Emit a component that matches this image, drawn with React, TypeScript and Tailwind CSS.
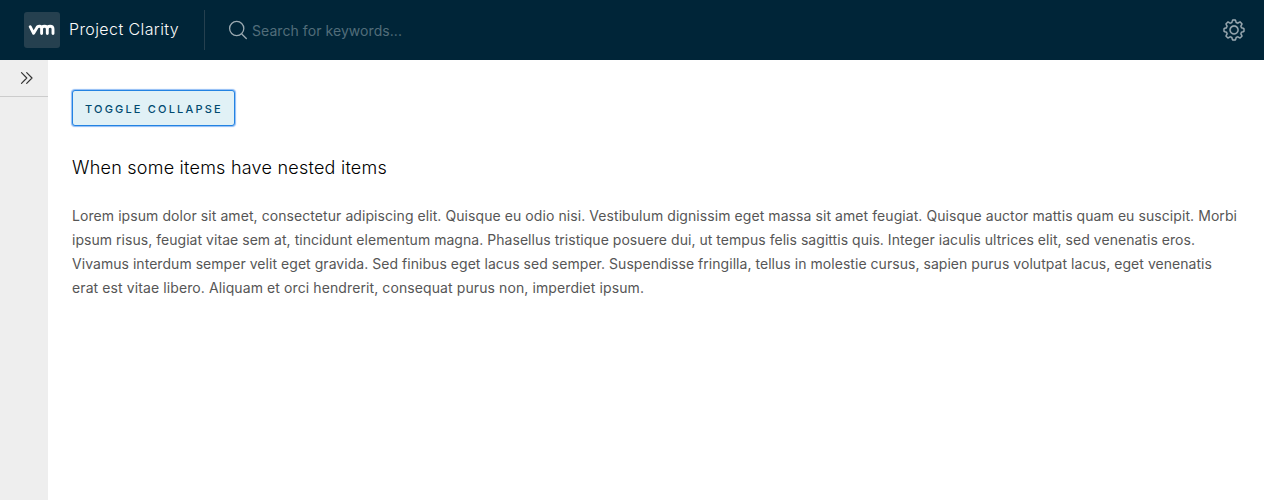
function SearchIcon() {
  return (
    <svg className="size-5 shrink-0" viewBox="0 0 20 20" fill="none" stroke="#9aa9b1" strokeWidth="1.3" strokeLinecap="round">
      <circle cx="8.7" cy="8.5" r="7.1" />
      <path d="M14 14.2 18.3 18.5" />
    </svg>
  );
}

function CogIcon() {
  return (
    <svg className="size-6" viewBox="0 0 36 36" fill="#9aa9b1" stroke="#9aa9b1" strokeWidth="0.3">
      <path d="M18.1,11c-3.9,0-7,3.1-7,7s3.1,7,7,7c3.9,0,7-3.1,7-7S22,11,18.1,11z M18.1,23c-2.8,0-5-2.2-5-5s2.2-5,5-5c2.8,0,5,2.2,5,5S20.9,23,18.1,23z" />
      <path d="M32.8,14.7L30,13.8l-0.6-1.5l1.4-2.6c0.3-0.6,0.2-1.4-0.3-1.9l-2.4-2.4c-0.5-0.5-1.3-0.6-1.9-0.3l-2.6,1.4l-1.5-0.6l-0.9-2.8C21,2.5,20.4,2,19.7,2h-3.4c-0.7,0-1.3,0.5-1.4,1.2L14,6c-0.6,0.1-1.1,0.3-1.6,0.6L9.8,5.2C9.2,4.9,8.4,5,7.9,5.5L5.5,7.9C5,8.4,4.9,9.2,5.2,9.8l1.3,2.5c-0.2,0.5-0.4,1.1-0.6,1.6l-2.8,0.9C2.5,15,2,15.6,2,16.3v3.4c0,0.7,0.5,1.3,1.2,1.5L6,22.1l0.6,1.5l-1.4,2.6c-0.3,0.6-0.2,1.4,0.3,1.9l2.4,2.4c0.5,0.5,1.3,0.6,1.9,0.3l2.6-1.4l1.5,0.6l0.9,2.9c0.2,0.6,0.8,1.1,1.5,1.1h3.4c0.7,0,1.3-0.5,1.5-1.1l0.9-2.9l1.5-0.6l2.6,1.4c0.6,0.3,1.4,0.2,1.9-0.3l2.4-2.4c0.5-0.5,0.6-1.3,0.3-1.9l-1.4-2.6l0.6-1.5l2.9-0.9c0.6-0.2,1.1-0.8,1.1-1.5v-3.4C34,15.6,33.5,14.9,32.8,14.7z M32,19.4l-3.6,1.1L28.3,21c-0.3,0.7-0.6,1.4-0.9,2.1l-0.3,0.5l1.8,3.3l-2,2l-3.3-1.8l-0.5,0.3c-0.7,0.4-1.4,0.7-2.1,0.9l-0.5,0.1L19.4,32h-2.8l-1.1-3.6L15,28.3c-0.7-0.3-1.4-0.6-2.1-0.9l-0.5-0.3l-3.3,1.8l-2-2l1.8-3.3l-0.3-0.5c-0.4-0.7-0.7-1.4-0.9-2.1l-0.1-0.5L4,19.4v-2.8l3.4-1l0.2-0.5c0.2-0.8,0.5-1.5,0.9-2.2l0.3-0.5L7.1,9.1l2-2l3.2,1.8l0.5-0.3c0.7-0.4,1.4-0.7,2.2-0.9l0.5-0.2L16.6,4h2.8l1.1,3.5L21,7.7c0.7,0.2,1.4,0.5,2.1,0.9l0.5,0.3l3.3-1.8l2,2l-1.8,3.3l0.3,0.5c0.4,0.7,0.7,1.4,0.9,2.1l0.1,0.5l3.6,1.1V19.4z" />
    </svg>
  );
}

function Logo() {
  return (
    <svg className="size-9" viewBox="0 0 36 36" fill="none" strokeLinecap="round" strokeLinejoin="round">
      <rect width="36" height="36" rx="3" fill="#25404f" />
      <path
        d="M6.2 14.7 9.6 21.3 13.3 14.9Q14.2 14.2 15.6 14.2Q17.6 14.2 17.6 16.4V21.5M17.6 17Q17.6 14.2 20.5 14.2Q23.3 14.2 23.3 17V21.5M23.3 17Q23.3 14.2 26.1 14.2Q29 14.2 29 17V21.5"
        stroke="#fff"
        strokeWidth="2.9"
      />
    </svg>
  );
}

export default function App() {
  return (
    <div className="flex h-[500px] w-full flex-col overflow-hidden bg-white font-['Inter',sans-serif]">
      <header className="flex h-[60px] shrink-0 items-center bg-[#002538] pr-[18px] pl-6">
        <Logo />
        <span className="mb-0.5 ml-[9px] w-[135px] text-[16px] leading-6 font-light tracking-[0.4px] whitespace-nowrap text-[#fafafa]">
          Project Clarity
        </span>
        <div className="h-10 w-px bg-[#25404f]" />
        <label className="ml-[23px] flex flex-1 items-center">
          <SearchIcon />
          <span className="mt-px ml-1 text-[14px] leading-6 tracking-[0.067px] text-[#526d7a]">Search for keywords...</span>
        </label>
        <button className="flex" aria-label="Settings">
          <CogIcon />
        </button>
      </header>
      <div className="flex flex-1">
        <nav className="w-12 shrink-0 bg-[#eee]">
          <button className="flex h-[37px] w-full items-center border-b border-[#ccc] pl-5" aria-label="Expand">
            <svg className="size-3.5" viewBox="0 0 14 14" fill="none" stroke="#333" strokeWidth="1.2" strokeLinecap="round" strokeLinejoin="round">
              <path d="M1.5 1.7 6.8 7 1.5 12.3M6.7 1.7 12 7 6.7 12.3" />
            </svg>
          </button>
        </nav>
        <main className="flex flex-col items-start pt-[30px] pl-6">
          <button className="flex h-9 w-[163px] items-center rounded-[3px] border border-[#2383e2] bg-[#e1f1f6] pt-[3px] pl-3 text-[11px] leading-none font-medium tracking-[2.18px] whitespace-nowrap text-[#004a70] shadow-[0_0_1px_1px_#8fbcf5]">
            TOGGLE COLLAPSE
          </button>
          <h1 className="mt-[30px] text-[18px] leading-6 font-light tracking-[0.235px] text-black">When some items have nested items</h1>
          <p className="mt-6 text-[14px] leading-6 whitespace-nowrap text-[#565656]">
            <span className="block tracking-[0.072px]">Lorem ipsum dolor sit amet, consectetur adipiscing elit. Quisque eu odio nisi. Vestibulum dignissim eget massa sit amet feugiat. Quisque auctor mattis quam eu suscipit. Morbi</span>
            <span className="block tracking-[0.038px]">ipsum risus, feugiat vitae sem at, tincidunt elementum magna. Phasellus tristique posuere dui, ut tempus felis sagittis quis. Integer iaculis ultrices elit, sed venenatis eros.</span>
            <span className="block tracking-[0.043px]">Vivamus interdum semper velit eget gravida. Sed finibus eget lacus sed semper. Suspendisse fringilla, tellus in molestie cursus, sapien purus volutpat lacus, eget venenatis</span>
            <span className="block tracking-[0.099px]">erat est vitae libero. Aliquam et orci hendrerit, consequat purus non, imperdiet ipsum.</span>
          </p>
        </main>
      </div>
    </div>
  );
}
